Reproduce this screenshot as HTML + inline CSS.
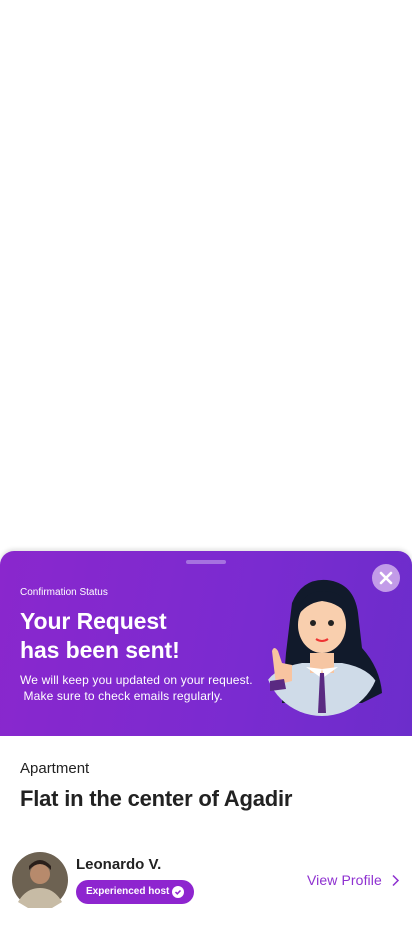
<!DOCTYPE html>
<html><head><meta charset="utf-8"><style>
*{margin:0;padding:0;box-sizing:border-box}
body{width:412px;height:940px;background:#fff;font-family:"Liberation Sans",sans-serif;position:relative;overflow:hidden}
.card{position:absolute;left:0;top:551px;width:412px;height:389px;background:#fff;border-radius:14px 14px 0 0;box-shadow:0 -2px 4px rgba(0,0,0,.12);overflow:hidden}
.hero{position:absolute;left:0;top:0;width:412px;height:185px;background:linear-gradient(100deg,#8a27cd 0%,#7a2bd0 60%,#6c2dcb 100%)}
.handle{position:absolute;left:186px;top:9px;width:40px;height:4px;border-radius:2px;background:#a672e0}
.t{position:absolute;color:#fff;white-space:nowrap}
.close{position:absolute;left:372px;top:13px;width:28px;height:28px;border-radius:50%;background:#c29be8}
</style></head><body>
<div class="card">
 <div class="hero">
  <div class="handle"></div>
  <div class="t" style="left:20px;top:36px;font-size:10px">Confirmation Status</div>
  <div class="t" style="left:20px;top:56px;font-size:23px;font-weight:bold;line-height:29px;letter-spacing:-0.1px">Your Request<br>has been sent!</div>
  <div class="t" style="left:20px;top:121px;font-size:12px;line-height:16px;letter-spacing:0.15px">We will keep you updated on your request.<br>&nbsp;Make sure to check emails regularly.</div>
  <svg style="position:absolute;left:262px;top:22px" width="122" height="145" viewBox="0 0 122 145">
   <defs><clipPath id="c"><circle cx="60" cy="85" r="58"/></clipPath></defs>
   <path d="M30 30 Q40 5 65 7 Q92 10 96 40 L100 75 Q118 95 120 120 L100 130 L20 130 L24 80 Z" fill="#111a2b"/>
   <g clip-path="url(#c)">
    <path d="M0 145 L4 110 Q12 95 40 90 L80 90 Q108 95 116 112 L122 145 Z" fill="#cfdbe8"/>
   </g>
   <path d="M48 80 L72 80 L72 100 L48 100Z" fill="#f6c6a3"/>
   <path d="M44 94 L58 104 L60 96 Z M76 94 L62 104 L60 96Z" fill="#fff"/>
   <path d="M58 100 L62 100 L64 140 L56 140Z" fill="#5a2a82"/>
   <ellipse cx="60" cy="52" rx="24" ry="28" fill="#f9cfae"/>
   <path d="M34 45 Q38 18 62 18 Q86 18 88 45 Q78 30 60 28 Q44 30 34 45Z" fill="#111a2b"/>
   <circle cx="51" cy="50" r="3" fill="#222"/><circle cx="69" cy="50" r="3" fill="#222"/>
   <path d="M54 66 Q60 70 66 66" stroke="#e33" stroke-width="2" fill="none"/>
   <path d="M12 95 L10 78 Q12 72 16 78 L20 90 L30 92 L30 108 L14 112 Z" fill="#f8c4a0"/>
   <path d="M8 108 L22 106 L24 116 L8 118Z" fill="#5a2a82"/>
  </svg>
  <div class="close"><svg width="28" height="28"><path d="M9 9L19 19M19 9L9 19" stroke="#fff" stroke-width="2.6" stroke-linecap="round"/></svg></div>
 </div>
 <div style="position:absolute;left:20px;top:209px;font-size:15px;color:#222">Apartment</div>
 <div style="position:absolute;left:20px;top:235px;font-size:22px;font-weight:bold;color:#222;letter-spacing:-0.2px">Flat in the center of Agadir</div>
 <svg style="position:absolute;left:12px;top:301px" width="56" height="56"><circle cx="28" cy="28" r="28" fill="#6d6252"/><circle cx="28" cy="22" r="10" fill="#b78a6c"/><path d="M17 18 Q28 6 39 18 L39 14 Q28 2 17 14Z" fill="#2a1f1a"/><path d="M6 50 Q14 36 28 36 Q42 36 50 50 L40 56 L16 56Z" fill="#c7bba5"/></svg>
 <div style="position:absolute;left:76px;top:305px;font-size:15px;font-weight:bold;color:#222">Leonardo V.</div>
 <div style="position:absolute;left:76px;top:329px;width:118px;height:24px;border-radius:12px;background:#8e25cf;color:#fff;font-size:10px;font-weight:bold;line-height:24px;padding-left:10px">Experienced host
  <svg style="position:absolute;left:96px;top:6px" width="12" height="12"><circle cx="6" cy="6" r="6" fill="#fff"/><path d="M3.5 6L5.3 7.8L8.5 4.5" stroke="#8e25cf" stroke-width="1.5" fill="none"/></svg></div>
 <div style="position:absolute;left:307px;top:321px;font-size:14px;color:#8e30d0;letter-spacing:0.1px">View Profile</div>
 <svg style="position:absolute;left:391px;top:323px" width="9" height="13"><path d="M2 1.5L7 6.5L2 11.5" stroke="#8e30d0" stroke-width="1.5" fill="none"/></svg>
</div>
</body></html>
